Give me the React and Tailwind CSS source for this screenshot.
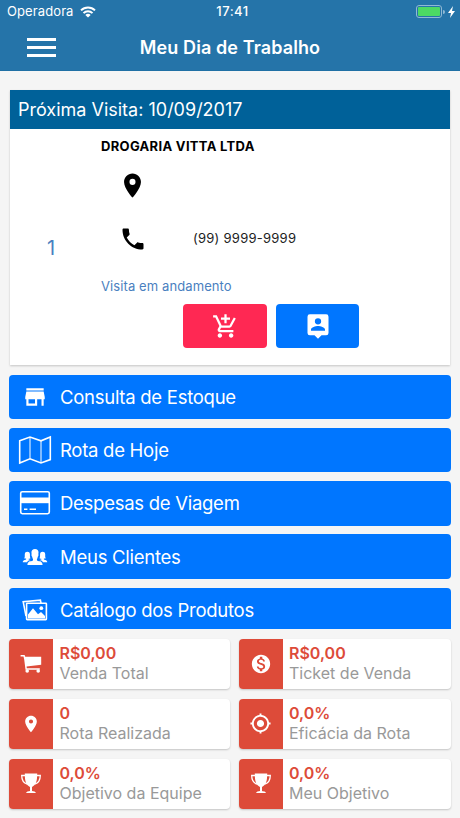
import React from "react";
import { MdPlace, MdPhone, MdAddShoppingCart, MdStore, MdMonetizationOn } from "react-icons/md";
import { IoIosPeople, IoMdLocate } from "react-icons/io";

const MapIcon = () => (
  <svg width="34" height="30" viewBox="0 0 34 30" fill="none" stroke="currentColor" strokeWidth="1.6">
    <path d="M1.7 5.8 12 2l11 3.8L32.3 2v22.6L23 28l-11-4.2L1.7 28z" />
    <path d="M12 2v21.8M23 5.8V28" strokeWidth="1" />
  </svg>
);

const CardIcon = () => (
  <svg width="32" height="26" viewBox="0 0 32 26" fill="none" stroke="currentColor" strokeWidth="1.6">
    <rect x="1.7" y="1.7" width="28.6" height="22" rx="1.6" />
    <path d="M2 7.5h28v5.7H2z" fill="currentColor" stroke="none" />
    <path d="M5 19.3h3.4M10.6 19.3H17" />
  </svg>
);

const PhotosIcon = () => (
  <svg width="26" height="22" viewBox="0 0 26 22" fill="none" stroke="currentColor" strokeWidth="1.6">
    <path d="M4 17.2 1.2 2.8 18.4 1.2l.6 3" />
    <rect x="4.6" y="4.2" width="19.8" height="16.4" rx=".6" />
    <path d="M6 19.5v-4l5-6.3 5 6 3-2.2 4 4v2.5z" fill="currentColor" stroke="none" />
    <circle cx="19.3" cy="9.2" r="1.9" fill="currentColor" stroke="none" />
  </svg>
);

const PersonPinIcon = () => (
  <svg width="28" height="28" viewBox="0 0 24 24" fill="currentColor">
    <path
      fillRule="evenodd"
      d="M19 2H5a2 2 0 0 0-2 2v14a2 2 0 0 0 2 2h4l3 3 3-3h4a2 2 0 0 0 2-2V4a2 2 0 0 0-2-2zm-7 3.3a2.7 2.7 0 1 1 0 5.4 2.7 2.7 0 0 1 0-5.4zM18 16H6v-.9c0-2 4-3.1 6-3.1s6 1.1 6 3.1z"
    />
  </svg>
);

const CartIcon = () => (
  <svg width="22" height="20" viewBox="0 0 22 20" fill="currentColor">
    <path d="M.6 1h4l.7 1.8h15.9v7.9L6.600 12.500l.2 1.700h13v1.500H5.500L4.200 5.500 3.500 2.500H.6z" />
    <circle cx="7.2" cy="17" r="1.8" />
    <circle cx="18.2" cy="17" r="1.8" />
  </svg>
);

const TrophyIcon = () => (
  <svg width="20" height="21" viewBox="0 0 20 21" fill="currentColor">
    <path d="M3.8.6h12.4c0 7.2-1 11.700-5.200 13.300v4c1.500.5 3.900.4 3.900 2.100H5.100c0-1.700 2.400-1.600 3.900-2.100v-4C4.800 12.300 3.800 7.800 3.800.6z" />
    <path d="M4.500 2.500H.7c0 4.900 2.200 7.600 5.600 8.700M15.500 2.500h3.800c0 4.900-2.200 7.600-5.600 8.700" fill="none" stroke="currentColor" strokeWidth="1.3" />
  </svg>
);

const WifiIcon = () => (
  <svg width="16" height="12" viewBox="0 0 16 12" fill="none" stroke="currentColor" strokeWidth="2">
    <path d="M1 4.4a10 10 0 0 1 14 0M3.5 7.1a6.4 6.4 0 0 1 9 0" />
    <path d="M8 11.6 5.3 9a3.8 3.8 0 0 1 5.4 0z" fill="currentColor" stroke="none" />
  </svg>
);

const menu = [
  { label: "Consulta de Estoque", icon: <MdStore size={26} /> },
  { label: "Rota de Hoje", icon: <MapIcon /> },
  { label: "Despesas de Viagem", icon: <CardIcon /> },
  { label: "Meus Clientes", icon: <IoIosPeople size={28} /> },
  { label: "Catálogo dos Produtos", icon: <PhotosIcon /> },
];

const stats = [
  { value: "R$0,00", label: "Venda Total", icon: <CartIcon /> },
  { value: "R$0,00", label: "Ticket de Venda", icon: <MdMonetizationOn size={22} /> },
  { value: "0", label: "Rota Realizada", icon: <MdPlace size={20} /> },
  { value: "0,0%", label: "Eficácia da Rota", icon: <IoMdLocate size={23} /> },
  { value: "0,0%", label: "Objetivo da Equipe", icon: <TrophyIcon /> },
  { value: "0,0%", label: "Meu Objetivo", icon: <TrophyIcon /> },
];

const Header = () => (
  <header className="h-[71px] bg-[#2574a9] text-white border-b border-[#2070a5]">
    <div className="grid grid-cols-3 items-center h-[23px] pl-[7px] pr-[5px] text-[13px]">
      <div className="flex items-center gap-[6px]">
        <span className="tracking-[0.1px]">Operadora</span>
        <WifiIcon />
      </div>
      <span className="pl-[3px] text-center font-medium tracking-[0.5px]">17:41</span>
      <div className="flex items-center justify-end">
        <div className="w-[26px] h-[13px] rounded-[3px] border border-[#91b9d4] p-px">
          <div className="h-full rounded-[1px] bg-[#4cd964]" />
        </div>
        <div className="w-[2px] h-1 ml-px mr-[3px] rounded-r bg-[#91b9d4]" />
        <svg width="7" height="12" viewBox="0 0 7 12" fill="currentColor">
          <path d="M5 0 0 7h3L2 12l5-7H4z" />
        </svg>
      </div>
    </div>
    <div className="grid grid-cols-[90px_1fr_90px] items-center h-12">
      <button className="flex flex-col gap-[5px] ml-[27px] w-[29px]">
        <span className="h-[3px] w-full bg-white" />
        <span className="h-[3px] w-full bg-white" />
        <span className="h-[3px] w-full bg-white" />
      </button>
      <h1 className="text-center text-[18px] font-semibold tracking-[0.1px] whitespace-nowrap">Meu Dia de Trabalho</h1>
    </div>
  </header>
);

const NextVisit = () => (
  <section className="h-[275px] shrink-0 mx-px bg-white shadow-[0_1px_2px_rgba(0,0,0,0.2)]">
    <div className="flex items-center h-[39px] px-2 bg-[#006199] text-white text-[18px]">
      Próxima Visita: 10/09/2017
    </div>
    <div className="grid grid-cols-[91px_1fr] h-[236px]">
      <div className="flex items-center justify-center pt-[2px] pr-[9px] text-[20px] text-[#4a80c0]">1</div>
      <div className="flex flex-col items-start text-[13px] text-[#222]">
        <div className="mt-2 h-[18px] leading-[18px] font-bold text-black tracking-[0.32px]">DROGARIA VITTA LTDA</div>
        <div className="flex items-center h-[60px] pl-[17px] text-black">
          <MdPlace size={29} />
        </div>
        <div className="flex items-center h-[47px] pl-[18px] gap-[46px]">
          <MdPhone size={28} className="text-black" />
          <span className="tracking-[0.25px]">(99) 9999-9999</span>
        </div>
        <div className="h-[30px] leading-[48px] text-[#4a80c0] tracking-[0.1px]">Visita em andamento</div>
        <div className="flex gap-[9px] mt-[12px] ml-[82px] text-white">
          <button className="flex items-center justify-center w-[84px] h-[44px] rounded bg-[#ff2853]">
            <MdAddShoppingCart size={27} />
          </button>
          <button className="flex items-center justify-center w-[83px] h-[44px] rounded bg-[#0076ff]">
            <PersonPinIcon />
          </button>
        </div>
      </div>
    </div>
  </section>
);

const App = () => {
  return (
    <div className="flex flex-col h-[818px] w-full overflow-hidden bg-[#f5f5f5] font-['Inter',sans-serif]">
      <Header />
      <main className="flex flex-col h-[558px] pt-[19px] px-[9px] overflow-hidden">
        <NextVisit />
        <nav className="flex flex-col gap-[8.8px] mt-[9.5px]">
          {menu.map((m) => (
            <button key={m.label} className="flex items-center h-[44.5px] shrink-0 rounded bg-[#0076ff] text-white">
              <span className="flex justify-center w-[51px]">{m.icon}</span>
              <span className="pt-[2px] text-left text-[18.5px] tracking-[-0.27px] whitespace-nowrap">{m.label}</span>
            </button>
          ))}
        </nav>
      </main>
      <footer className="grid grid-cols-[220.5px_212px] gap-x-[9px] gap-y-[10px] px-[9px] pt-[9.5px]">
        {stats.map((s) => (
          <div key={s.label} className="flex h-[50px] rounded bg-white overflow-hidden shadow-[0_1px_2px_rgba(0,0,0,0.2)]">
            <div className="flex items-center justify-center w-[44px] shrink-0 bg-[#dd4b39] text-white">{s.icon}</div>
            <div className="pl-[6.5px] pt-[4.5px] text-[16px] leading-[20px] whitespace-nowrap">
              <div className="font-semibold text-[#dd4b39]">{s.value}</div>
              <div className="text-[#999]">{s.label}</div>
            </div>
          </div>
        ))}
      </footer>
    </div>
  );
};

export default App;
